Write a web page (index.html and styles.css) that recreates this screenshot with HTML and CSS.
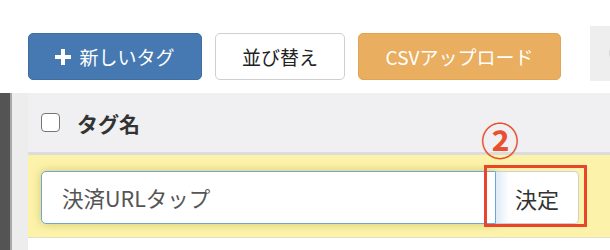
FILE: index.html
```html
<!DOCTYPE html>
<html lang="ja">
<head>
<meta charset="utf-8">
<link rel="stylesheet" href="styles.css">
</head>
<body>
<div class="toolbar">
  <button class="btn btn-primary"><span class="plus"></span>新しいタグ</button>
  <button class="btn btn-default">並び替え</button>
  <button class="btn btn-warning">CSVアップロード</button>
  <div class="partial"><span class="dot"></span></div>
</div>
<div class="main">
  <div class="sidebar"></div>
  <div class="gutter"></div>
  <div class="content">
    <div class="thead">
      <span class="checkbox"></span>
      <span class="th-label">タグ名</span>
    </div>
    <div class="edit-row">
      <div class="input-group">
        <div class="input">決済URLタップ</div>
        <div class="btn-submit">決定</div>
      </div>
    </div>
    <div class="blank-row"></div>
  </div>
</div>
<div class="annot-box"></div>
<div class="annot-num">②</div>
</body>
</html>
```
FILE: styles.css
```css
html, body {
  margin: 0;
  padding: 0;
}
body {
  width: 610px;
  height: 250px;
  overflow: hidden;
  position: relative;
  background: #fff;
  font-family: "Noto Sans CJK JP", "Noto Sans", sans-serif;
}
.toolbar {
  height: 93px;
  box-sizing: border-box;
  padding: 26px 0 0 28px;
  display: flex;
  align-items: flex-start;
  gap: 13px;
  background: #fff;
}
.btn {
  flex-shrink: 0;
  margin-top: 7px;
  height: 47px;
  border-radius: 5px;
  font-family: inherit;
  font-size: 19px;
  font-weight: 400;
  border: 1px solid transparent;
  display: flex;
  align-items: center;
  justify-content: center;
  padding: 0;
  box-sizing: border-box;
}
.btn-primary {
  width: 174px;
  background: #4679b2;
  border-color: #3f6ea3;
  color: #fff;
}
.plus {
  width: 16px;
  height: 16px;
  margin-right: 8px;
  position: relative;
}
.plus::before, .plus::after {
  content: "";
  position: absolute;
  background: #fff;
}
.plus::before { left: 0; right: 0; top: 6px; height: 4px; }
.plus::after { top: 0; bottom: 0; left: 6px; width: 4px; }
.btn-default {
  width: 130px;
  background: #fff;
  border-color: #cfcfcf;
  color: #222;
}
.btn-warning {
  width: 203px;
  background: #e9ae5f;
  border-color: #e3a451;
  color: #fff;
}
.partial {
  flex-shrink: 0;
  margin-left: 16px;
  width: 30px;
  height: 55px;
  background: #eeeeee;
  position: relative;
}
.dot {
  position: absolute;
  left: 19px;
  top: 23px;
  width: 6px;
  height: 8px;
  border-radius: 3px;
  background: #d6d6d6;
}
.main {
  display: flex;
  height: 157px;
}
.sidebar {
  width: 10px;
  background: #545454;
  border-right: 2px solid #a9a9a9;
}
.gutter {
  width: 16px;
  background: #ededee;
}
.content {
  flex: 1;
  display: flex;
  flex-direction: column;
}
.thead {
  height: 59px;
  background: #f0f0f2;
  border-bottom: 3px solid #dcdcdc;
  display: flex;
  align-items: center;
  padding-left: 13px;
  gap: 17px;
}
.checkbox {
  width: 19px;
  height: 19px;
  box-sizing: border-box;
  border: 1.5px solid #767676;
  border-radius: 4px;
  background: #fff;
}
.th-label {
  font-size: 21px;
  font-weight: 700;
  color: #333;
}
.edit-row {
  height: 83px;
  box-sizing: border-box;
  background: #fcf2a9;
  border-bottom: 1px solid #e3e0c8;
  padding: 16px 0 0 13px;
}
.input-group {
  display: flex;
  height: 53px;
}
.input {
  width: 455px;
  box-sizing: border-box;
  border: 1px solid #6ea6dc;
  border-radius: 5px 0 0 5px;
  background: #fff;
  box-shadow: 0 0 8px rgba(170, 160, 60, 0.5);
  font-size: 21.5px;
  color: #555;
  padding-left: 20px;
  display: flex;
  align-items: center;
}
.btn-submit {
  width: 83px;
  box-sizing: border-box;
  border: 1px solid #cfcfcf;
  border-left: none;
  border-radius: 0 5px 5px 0;
  background: #fff;
  box-shadow: inset 14px 0 10px -8px rgba(110, 166, 220, 0.25);
  font-size: 22px;
  color: #333;
  display: flex;
  align-items: center;
  justify-content: center;
}
.blank-row {
  flex: 1;
  background: #fff;
}
.annot-box {
  position: absolute;
  left: 484px;
  top: 165px;
  width: 103px;
  height: 62px;
  box-sizing: border-box;
  border: 3px solid #e8462c;
  z-index: 5;
}
.annot-num {
  position: absolute;
  left: 481px;
  top: 117px;
  font-size: 38px;
  line-height: 44px;
  font-weight: 700;
  color: #e8502f;
  z-index: 5;
}
```
